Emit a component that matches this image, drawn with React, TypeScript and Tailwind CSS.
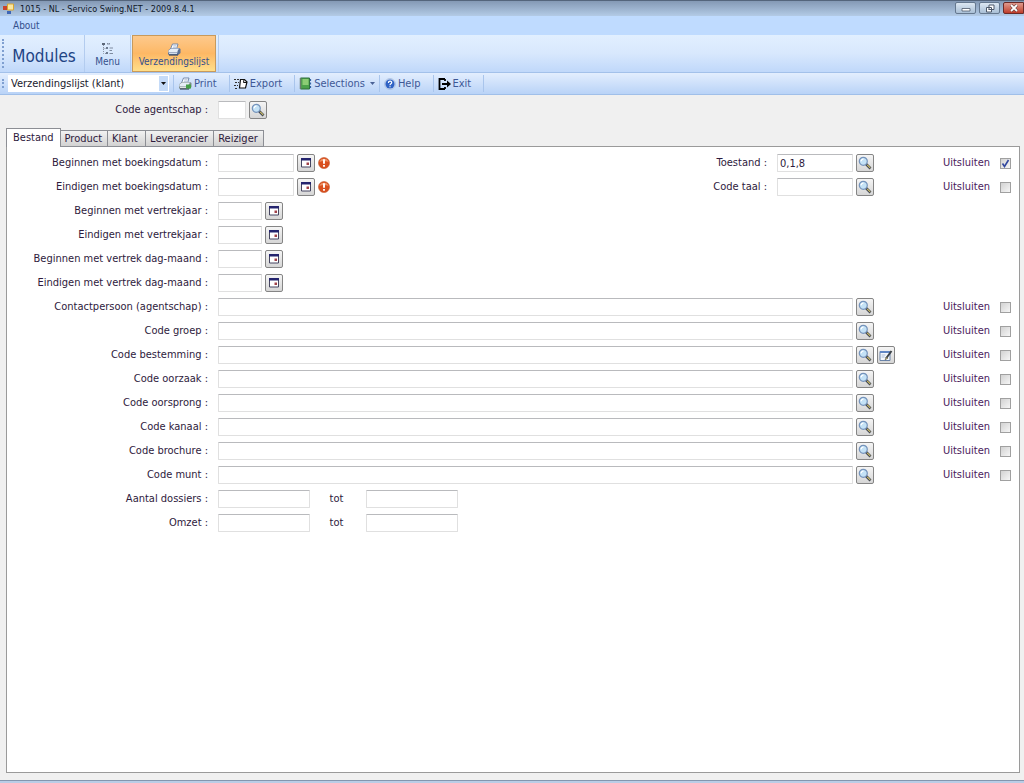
import { useState } from "react";
import type { ReactNode } from "react";

const tabs = ["Bestand", "Product", "Klant", "Leverancier", "Reiziger"];

const yearRows = [
  "Beginnen met vertrekjaar",
  "Eindigen met vertrekjaar",
  "Beginnen met vertrek dag-maand",
  "Eindigen met vertrek dag-maand",
];

const codeRows = [
  "Contactpersoon (agentschap)",
  "Code groep",
  "Code bestemming",
  "Code oorzaak",
  "Code oorsprong",
  "Code kanaal",
  "Code brochure",
  "Code munt",
];

const inputClass =
  "h-[18px] min-w-0 rounded-[1px] border border-[#e0e0e0] border-t-[#b9babd] bg-white px-[2px] outline-none focus:border-[#7da2ce]";

function PrinterIcon({ green = false }: { green?: boolean }) {
  return (
    <svg width="14" height="13" viewBox="0 0 14 13" aria-hidden="true">
      <path d="M5.500 1H11L9.500 6H3.500z" fill="#fff" stroke="#6a80a4" strokeWidth="0.9" />
      <path d="M6.300 2.800h3.200M5.800 4.300H9" stroke="#9db3d0" strokeWidth="0.8" />
      <path d="M1.500 7L4 5h8l1.500 1v4L11 12.300H2L1 11z" fill={green ? "#7d8b88" : "#5c7196"} />
      <path d="M1.500 7.500L4 5.500h8L10.500 8v1.500h-9z" fill="#e6edf6" />
      <path d="M2 10.600h8" stroke={green ? "#e8eeea" : "#dfe8f5"} strokeWidth="1" />
      <path d="M2 12h9" stroke="#303e58" strokeWidth="1" />
      {green && <path d="M8 7.500h5v4H8z" fill="#45a047" />}
    </svg>
  );
}

function MenuTreeIcon() {
  return (
    <svg width="14" height="14" viewBox="0 0 14 14" aria-hidden="true">
      <path d="M2.500 3v8.500H6M2.500 6.500H5M6 1.500h3" fill="none" stroke="#8b93a3" strokeDasharray="1 1" />
      <path d="M1 1h3v2H1z" fill="#5b6678" />
      <path d="M5 5h2v2H5zM5 10h2v2H5z" fill="#6c7a90" />
      <path d="M6 2h3M8.500 6H12M8.500 8.500H11M8.500 11.500H12" stroke="#7e8ba0" />
    </svg>
  );
}

function ExportIcon() {
  return (
    <svg width="14" height="12" viewBox="0 0 14 12" aria-hidden="true">
      <path d="M0 1.500h6M1 4.500h4M0 7.500h4M1 10.500h3" stroke="#333" strokeDasharray="2 1" />
      <path d="M6.500 1.500h4l2.500 2.500-1.500 6h-6z" fill="#fff" stroke="#111" strokeWidth="1.200" />
      <path d="M10 1.500L9.500 4.500H13" fill="none" stroke="#111" />
    </svg>
  );
}

function BookIcon() {
  return (
    <svg width="13" height="13" viewBox="0 0 13 13" aria-hidden="true">
      <path d="M1.500 1h9v11h-9z" fill="#4ca24a" stroke="#2f6f38" />
      <path d="M3.500 2h6v6h-6z" fill="#8ccc74" />
      <path d="M1.500 1v11" stroke="#6b7d70" strokeWidth="1.500" />
      <path d="M11.500 2v2M11.500 5.500v2M11.500 9v2" stroke="#3465a4" strokeWidth="1.200" />
    </svg>
  );
}

function HelpIcon() {
  return (
    <svg width="12" height="12" viewBox="0 0 12 12" aria-hidden="true">
      <circle cx="6" cy="6" r="5.400" fill="#dce8fa" stroke="#9fb6d8" strokeWidth="0.8" />
      <circle cx="6" cy="6" r="4.600" fill="#2f62c4" />
      <path d="M4.400 4.900c0-2.300 3.400-2.300 3.300-.2C7.700 5.900 6 5.800 6 7.200M6 8.200v1.100" fill="none" stroke="#fff" strokeWidth="1.200" />
    </svg>
  );
}

function ExitIcon() {
  return (
    <svg width="13" height="12" viewBox="0 0 13 12" aria-hidden="true">
      <path d="M7 1H1.500v10H7M7 1v2M7 11V9" fill="none" stroke="#000" strokeWidth="1.800" />
      <path d="M4 5h5V2.500L13 6 9 9.500V7H4z" fill="#000" />
    </svg>
  );
}

function SearchIcon() {
  return (
    <svg width="14" height="14" viewBox="0 0 14 14" aria-hidden="true">
      <path d="M8 8l4.500 4.500" stroke="#3f4550" strokeWidth="2.600" />
      <path d="M9.200 8.800l3 3" stroke="#d6c468" strokeWidth="1.100" />
      <circle cx="5.300" cy="5.300" r="4" fill="#c4e2f6" stroke="#7593bb" strokeWidth="1.200" />
      <path d="M3.200 5.200c.1-1.300 1-2 2.200-2" fill="none" stroke="#fff" strokeWidth="1.200" />
    </svg>
  );
}

function CalendarIcon() {
  return (
    <svg width="10" height="10" viewBox="0 0 10 10" aria-hidden="true">
      <path d="M.5.500h9v8.500h-9z" fill="#fff" stroke="#454560" />
      <path d="M0 0h10v2.500H0z" fill="#24246e" />
      <path d="M5.500 4.500h2.500v2.500H5.500z" fill="#a04048" />
    </svg>
  );
}

function EditIcon() {
  return (
    <svg width="14" height="13" viewBox="0 0 14 13" aria-hidden="true">
      <path d="M1 2.500h10v9H1z" fill="#f4f8fd" stroke="#6a83a8" />
      <path d="M1 2h10v2H1z" fill="#5f86c4" />
      <path d="M2.500 6h4M2.500 8h3" stroke="#a9bbd4" />
      <path d="M12.500 2L7 9.500" stroke="#3a4148" strokeWidth="2" />
      <path d="M7.400 8L6 11l2.800-1.800z" fill="#d8c173" stroke="#40453c" strokeWidth="0.500" />
    </svg>
  );
}

function ErrorIcon() {
  return (
    <svg width="12" height="12" viewBox="0 0 12 12" role="img" aria-label="Verplicht">
      <circle cx="6" cy="6" r="5.500" fill="#d9501f" stroke="#c2562c" strokeWidth="0.600" />
      <path d="M1.500 5C2 .5 10 .5 10.500 5 8 3.500 4 3.500 1.500 5z" fill="#f09468" />
      <path d="M6 2.300v4.400M6 8v1.700" stroke="#fff" strokeWidth="1.900" />
    </svg>
  );
}

function IconButton({ label, children }: { label: string; children: ReactNode }) {
  return (
    <button
      type="button"
      aria-label={label}
      className="flex size-[18px] shrink-0 items-center justify-center rounded-[2px] border border-[#858585] bg-linear-to-b from-[#f5f5f5] to-[#d6d6d6]"
    >
      {children}
    </button>
  );
}

function SearchButton() {
  return (
    <IconButton label="Zoeken">
      <SearchIcon />
    </IconButton>
  );
}

function CalendarButton() {
  return (
    <IconButton label="Kalender">
      <CalendarIcon />
    </IconButton>
  );
}

function Exclude({ name, checked = false }: { name: string; checked?: boolean }) {
  const [on, setOn] = useState(checked);
  return (
    <label className="flex w-[68px] shrink-0 items-center justify-between text-[#4a1a5c]">
      Uitsluiten
      <span className="relative flex size-[11px]">
        <input
          type="checkbox"
          name={name}
          checked={on}
          onChange={(e) => setOn(e.target.checked)}
          className="size-[11px] appearance-none border border-[#a0a0a0] bg-linear-to-br from-[#d2d2d2] to-[#f6f6f6]"
        />
        {on && (
          <svg className="pointer-events-none absolute inset-0" width="11" height="11" viewBox="0 0 11 11" aria-hidden="true">
            <path d="M2.500 5.500l2 3 4-6.500" fill="none" stroke="#31479e" strokeWidth="1.600" />
          </svg>
        )}
      </span>
    </label>
  );
}

function Row({ label, id, children }: { label: string; id: string; children: ReactNode }) {
  return (
    <div className="flex h-6 items-center gap-[10px]">
      <label htmlFor={id} className="w-[201px] shrink-0 text-right">
        {label} :
      </label>
      <div className="flex min-w-0 flex-1 items-center gap-[3px]">{children}</div>
    </div>
  );
}

function SideField({ label, id, value, checked }: { label: string; id: string; value?: string; checked?: boolean }) {
  return (
    <>
      <label htmlFor={id} className="mr-[7px] ml-auto">
        {label} :
      </label>
      <input id={id} defaultValue={value} className={`${inputClass} w-[76px]`} />
      <SearchButton />
      <div className="ml-[66px]">
        <Exclude name={`${id}-uit`} checked={checked} />
      </div>
    </>
  );
}

function TitleBar() {
  const button =
    "flex h-3 w-[21px] items-center justify-center rounded-[2px] border border-[#65788f] bg-linear-to-b from-[#dce7f2] to-[#a9bfd6]";
  return (
    <header className="flex h-4 items-center border-t border-[#54657c] bg-linear-to-b from-[#8499b5] to-[#b3cbe6] pl-[3px] text-[9px] text-[#101828]">
      <svg width="11" height="11" viewBox="0 0 11 11" aria-hidden="true">
        <path d="M4.500 1h6v6h-6z" fill="#fbe7a0" stroke="#d9a530" />
        <path d="M0 3h4v4H0z" fill="#c8432c" />
        <path d="M4 8h4v3H4z" fill="#3d66b8" />
      </svg>
      <h1 className="ml-[6px]">1015 - NL - Servico Swing.NET - 2009.8.4.1</h1>
      <div className="ml-auto flex gap-[3px] self-start pt-px">
        <button type="button" aria-label="Minimaliseren" className={button}>
          <svg width="10" height="8" viewBox="0 0 10 8" aria-hidden="true">
            <path d="M1 4.500h8v2.500H1z" fill="#fff" stroke="#4c586a" strokeWidth="0.800" />
          </svg>
        </button>
        <button type="button" aria-label="Verkleinen" className={button}>
          <svg width="10" height="9" viewBox="0 0 10 9" aria-hidden="true">
            <path d="M4 1h5v4.500H4zM1.500 3.500h5V8h-5z" fill="#fff" stroke="#4c586a" />
            <path d="M3.500 5.500h1" stroke="#4c586a" />
          </svg>
        </button>
        <button
          type="button"
          aria-label="Sluiten"
          className="flex h-3 w-[21px] items-center justify-center rounded-l-[2px] border border-[#6b2b28] bg-linear-to-b from-[#e09a8e] to-[#be3a2a]"
        >
          <svg width="10" height="8" viewBox="0 0 10 8" aria-hidden="true">
            <path d="M2 1l6 6M8 1L2 7" stroke="#5a3a3a" strokeWidth="3" />
            <path d="M2 1l6 6M8 1L2 7" stroke="#fff" strokeWidth="1.800" />
          </svg>
        </button>
      </div>
    </header>
  );
}

function Grip() {
  return <div className="my-1 w-0 border-l-2 border-dotted border-[#7f9fd0]" />;
}

function Ribbon() {
  return (
    <div className="flex h-[38px] items-stretch border-b border-[#a3c1ea] bg-linear-to-b from-[#e1efff] via-[#d8e8fd] to-[#c0d8fa] pl-[2px] text-[10px] text-[#34508c]">
      <Grip />
      <h2 className="flex w-[80px] items-center justify-center pt-1 text-[17px] text-[#1e4484]">Modules</h2>
      <button
        type="button"
        className="flex w-[47px] flex-col items-center justify-end border-x border-[#b3ccef] pb-1 leading-3"
      >
        <MenuTreeIcon />
        Menu
      </button>
      <button
        type="button"
        className="ml-px flex w-[84px] flex-col items-center justify-end border border-[#c89a5c] bg-linear-to-b from-[#fdc98c] via-[#fdb865] via-50% to-[#ffdf8a] pb-[3px] leading-3"
      >
        <PrinterIcon />
        Verzendingslijst
      </button>
      <div className="ml-[2px] border-l border-[#b3ccef]" />
    </div>
  );
}

function ToolButton({ icon, label, arrow = false }: { icon: ReactNode; label: string; arrow?: boolean }) {
  return (
    <button
      type="button"
      className={`flex shrink-0 items-center gap-[2px] border-r border-[#a9c5ec] pl-1 ${arrow ? "pr-1" : "pr-3"}`}
    >
      {icon}
      {label}
      {arrow && (
        <svg className="ml-[3px]" width="5" height="3" viewBox="0 0 5 3" aria-hidden="true">
          <path d="M0 0h5L2.500 3z" fill="#4a6296" />
        </svg>
      )}
    </button>
  );
}

function Toolbar() {
  return (
    <div className="flex h-[22px] border-b border-[#a0bfe9] bg-linear-to-b from-[#e3eefe] to-[#b9d3f7] py-[2px] pl-[2px] text-[#3e5896]">
      <Grip />
      <div className="relative ml-1 flex w-[161px]">
        <select
          aria-label="Lijst"
          className="h-full w-full appearance-none bg-white pl-[3px] text-[#1a1a2c] outline-none"
        >
          <option>Verzendingslijst (klant)</option>
        </select>
        <span className="pointer-events-none absolute inset-y-px right-px flex w-[9px] items-center justify-center bg-[#c5dbf8]">
          <svg width="5" height="3" viewBox="0 0 5 3" aria-hidden="true">
            <path d="M0 0h5L2.500 3z" fill="#111" />
          </svg>
        </span>
      </div>
      <div className="ml-1 flex border-l border-[#a9c5ec]">
        <ToolButton icon={<PrinterIcon green />} label="Print" />
        <ToolButton icon={<ExportIcon />} label="Export" />
        <ToolButton icon={<BookIcon />} label="Selections" arrow />
        <ToolButton icon={<HelpIcon />} label="Help" />
        <ToolButton icon={<ExitIcon />} label="Exit" />
      </div>
    </div>
  );
}

function BestandPanel() {
  return (
    <div role="tabpanel" className="flex-1 border border-[#9a9a9a] bg-white pt-1 pr-2 pb-2">
      <Row label="Beginnen met boekingsdatum" id="boeking-van">
        <input id="boeking-van" className={`${inputClass} w-[76px]`} />
        <CalendarButton />
        <ErrorIcon />
        <SideField label="Toestand" id="toestand" value="0,1,8" checked />
      </Row>
      <Row label="Eindigen met boekingsdatum" id="boeking-tot">
        <input id="boeking-tot" className={`${inputClass} w-[76px]`} />
        <CalendarButton />
        <ErrorIcon />
        <SideField label="Code taal" id="taal" />
      </Row>
      {yearRows.map((label, i) => (
        <Row key={label} label={label} id={`vertrek-${i}`}>
          <input id={`vertrek-${i}`} className={`${inputClass} w-11`} />
          <CalendarButton />
        </Row>
      ))}
      {codeRows.map((label, i) => (
        <Row key={label} label={label} id={`code-${i}`}>
          <input id={`code-${i}`} className={`${inputClass} flex-1`} />
          <SearchButton />
          <div className="mr-[45px] w-[18px]">
            {label === "Code bestemming" && (
              <IconButton label="Bewerken">
                <EditIcon />
              </IconButton>
            )}
          </div>
          <Exclude name={`code-${i}-uit`} />
        </Row>
      ))}
      {["Aantal dossiers", "Omzet"].map((label) => (
        <Row key={label} label={label} id={label}>
          <input id={label} className={`${inputClass} w-[92px]`} />
          <label htmlFor={`${label}-tot`} className="w-[50px] pr-[3px] text-center">
            tot
          </label>
          <input id={`${label}-tot`} className={`${inputClass} w-[92px]`} />
        </Row>
      ))}
    </div>
  );
}

function App() {
  const [active, setActive] = useState("Bestand");

  return (
    <div className="flex min-h-screen flex-col bg-[#f0f0f0] font-['DejaVu_Sans_Condensed','DejaVu_Sans',sans-serif] text-[11px] leading-4 text-[#2e1a3c]">
      <TitleBar />
      <nav className="flex h-[19px] items-center bg-[#bfdbff] pl-[13px] text-[10px] text-[#34508c]">
        <a href="#about">About</a>
      </nav>
      <Ribbon />
      <Toolbar />
      <main className="flex flex-1 flex-col px-1 pt-[3px] pb-[7px] pl-[6px]">
        <div className="pl-px">
          <Row label="Code agentschap" id="agentschap">
            <input id="agentschap" className={`${inputClass} w-7`} />
            <SearchButton />
          </Row>
        </div>
        <div role="tablist" className="relative -mb-px mt-[6px] flex h-[19px] items-end">
          {tabs.map((tab) => (
            <button
              key={tab}
              type="button"
              role="tab"
              aria-selected={tab === active}
              onClick={() => setActive(tab)}
              className={
                tab === active
                  ? "h-[19px] border border-b-0 border-[#8c8e94] bg-white px-[6px]"
                  : "h-[17px] min-w-[38px] border border-l-0 border-[#8c8e94] bg-linear-to-b from-[#f2f2f2] to-[#d2d2d2] pr-[5px] pl-1 text-left"
              }
            >
              {tab}
            </button>
          ))}
        </div>
        <BestandPanel />
      </main>
      <footer className="h-[3px] border-t border-[#8496ae] bg-[#b9cde6]" />
    </div>
  );
}

export default App;
